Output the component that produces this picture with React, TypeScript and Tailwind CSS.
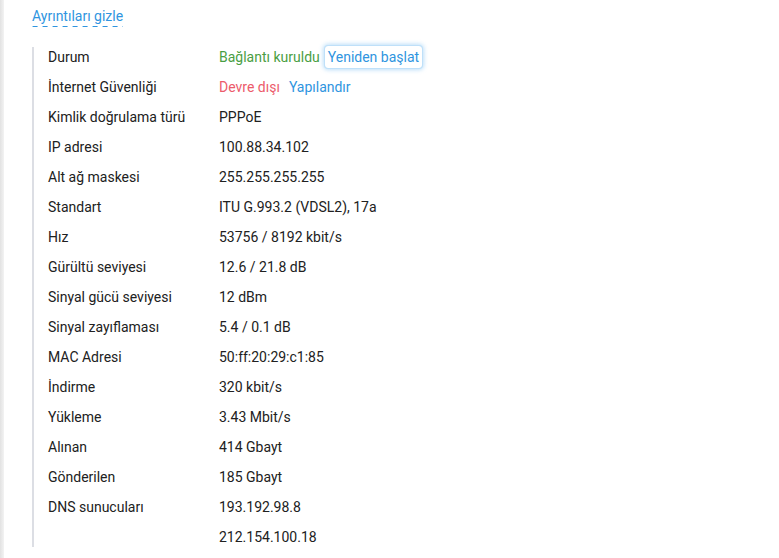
import React from 'react';

type Row = { label: string; value?: string };

const rows: Row[] = [
  { label: 'Kimlik doğrulama türü', value: 'PPPoE' },
  { label: 'IP adresi', value: '100.88.34.102' },
  { label: 'Alt ağ maskesi', value: '255.255.255.255' },
  { label: 'Standart', value: 'ITU G.993.2 (VDSL2), 17a' },
  { label: 'Hız', value: '53756 / 8192 kbit/s' },
  { label: 'Gürültü seviyesi', value: '12.6 / 21.8 dB' },
  { label: 'Sinyal gücü seviyesi', value: '12 dBm' },
  { label: 'Sinyal zayıflaması', value: '5.4 / 0.1 dB' },
  { label: 'MAC Adresi', value: '50:ff:20:29:c1:85' },
  { label: 'İndirme', value: '320 kbit/s' },
  { label: 'Yükleme', value: '3.43 Mbit/s' },
  { label: 'Alınan', value: '414 Gbayt' },
  { label: 'Gönderilen', value: '185 Gbayt' },
  { label: 'DNS sunucuları', value: '193.192.98.8' },
  { label: '', value: '212.154.100.18' },
];

function InfoRow({ label, children }: { label: string; children: React.ReactNode }) {
  return (
    <div className="flex h-[20px] items-center leading-[20px]">
      <div className="w-[171px] shrink-0">{label}</div>
      <div className="flex items-center gap-[9px]">{children}</div>
    </div>
  );
}

export default function App() {
  return (
    <div className="flex h-[558px] w-[779px] bg-white text-[14px] text-[#212121]" style={{ fontFamily: 'Roboto, "Liberation Sans", sans-serif' }}>
      <div className="w-[4px] shrink-0 bg-gradient-to-r from-[#e2e2e2] to-[#f3f3f3]" />
      <div className="flex-1 pl-[28px] pt-[6px]">
        <button
          type="button"
          className="bg-[linear-gradient(to_right,#2f95e0_5px,transparent_5px)] bg-[length:10px_1px] bg-bottom bg-repeat-x pb-[1px] leading-[20px] text-[#2f95e0]"
        >
          Ayrıntıları gizle
        </button>
        <div className="mt-[20px] flex flex-col gap-[10px] border-l-2 border-[#dcdee4] pl-[14px]">
          <InfoRow label="Durum">
            <span className="text-[#4a9e43]">Bağlantı kuruldu</span>
            <button
              type="button"
              className="-mx-[4px] rounded-[3px] px-[3px] leading-[22px] text-[#2f95e0] shadow-[0_0_0_1px_#bfe0f9,0_0_4px_2px_rgba(90,175,240,0.4)]"
            >
              Yeniden başlat
            </button>
          </InfoRow>
          <InfoRow label="İnternet Güvenliği">
            <span className="text-[#ec5b6b]">Devre dışı</span>
            <span className="text-[#2f95e0]">Yapılandır</span>
          </InfoRow>
          {rows.map((row, i) => (
            <InfoRow key={i} label={row.label}>
              <span>{row.value}</span>
            </InfoRow>
          ))}
        </div>
      </div>
    </div>
  );
}
